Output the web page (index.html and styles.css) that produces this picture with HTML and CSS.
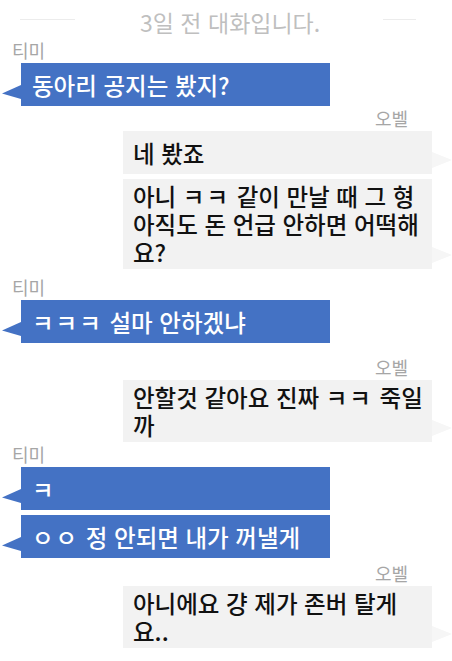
FILE: index.html
```html
<!DOCTYPE html>
<html lang="ko">
<head>
  <meta charset="UTF-8">
  <title>대화</title>
  <link rel="stylesheet" href="styles.css">
</head>
<body>
  <header class="day-divider">
    <span class="rule rule-left"></span>
    <span class="day-text">3일 전 대화입니다.</span>
    <span class="rule rule-right"></span>
  </header>

  <main class="chat">
    <section class="group them">
      <div class="name">티미</div>
      <div class="bubble"><p>동아리 공지는 봤지?</p></div>
    </section>

    <section class="group me">
      <div class="name">오벨</div>
      <div class="bubble"><p>네 봤죠</p></div>
      <div class="bubble"><p>아니 <span class="jamo">ㅋㅋ</span> 같이 만날 때 그 형 아직도 돈 언급 안하면 어떡해요?</p></div>
    </section>

    <section class="group them gap-m">
      <div class="name">티미</div>
      <div class="bubble"><p><span class="jamo">ㅋㅋㅋ</span> 설마 안하겠냐</p></div>
    </section>

    <section class="group me gap-l">
      <div class="name">오벨</div>
      <div class="bubble"><p>안할것 같아요 진짜 <span class="jamo">ㅋㅋ</span> 죽일까</p></div>
    </section>

    <section class="group them">
      <div class="name">티미</div>
      <div class="bubble"><p><span class="jamo">ㅋ</span></p></div>
      <div class="bubble"><p><span class="jamo">ㅇㅇ</span> 정 안되면 내가 꺼낼게</p></div>
    </section>

    <section class="group me gap-s">
      <div class="name">오벨</div>
      <div class="bubble"><p>아니에요 걍 제가 존버 탈게요..</p></div>
    </section>
  </main>
</body>
</html>
```

FILE: styles.css
```css
body {
  margin: 0;
  background: #fff;
  font-family: "Noto Sans CJK KR", "Noto Sans", sans-serif;
  color: #111;
}

/* date divider on top */
.day-divider {
  display: flex;
  align-items: center;
  padding: 5px 0 0 20px;
  height: 33px;
}
.rule {
  height: 1px;
  background: #ececec;
  margin-top: -4px;
}
.rule-left {
  width: 55px;
  margin-right: 65px;
}
.rule-right {
  width: 33px;
  margin-left: 63px;
}
.day-text {
  font-size: 23px;
  line-height: 32px;
  color: #bfbfbf;
}

/* message groups */
.chat {
  display: flex;
  flex-direction: column;
}
.group {
  display: flex;
  flex-direction: column;
  gap: 5px;
  margin-top: 1px;
}
.group.gap-s {
  margin-top: 4px;
}
.group.gap-m {
  margin-top: 7px;
}
.group.gap-l {
  margin-top: 13px;
}
.them {
  align-items: flex-start;
}
.me {
  align-items: flex-end;
}

.name {
  font-size: 18px;
  line-height: 22px;
  color: #a6a6a6;
  margin-bottom: -3px;
}
.them .name {
  margin-left: 12px;
}
.me .name {
  margin-right: 44px;
}

.bubble {
  position: relative;
  box-sizing: border-box;
  width: 309px;
  min-height: 43px;
  padding: 3px 4px 3px 11px;
  display: flex;
  align-items: center;
  font-size: 23.5px;
  font-weight: 500;
  line-height: 28px;
}
.bubble p {
  margin: 0;
}
.them .bubble {
  margin-left: 21px;
  background: #4472c4;
  color: #fff;
}
.me .bubble {
  margin-right: 20px;
  background: #f2f2f2;
  color: #111;
  padding-left: 10px;
}

/* compatibility jamo sit apart from each other */
.jamo {
  letter-spacing: 2px;
}

/* speech tails */
.bubble::after {
  content: "";
  position: absolute;
}
.them .bubble::after {
  left: -19px;
  bottom: 7px;
  width: 19px;
  height: 14px;
  background: #4472c4;
  clip-path: polygon(100% 0, 0 60%, 100% 100%);
}
.me .bubble::after {
  right: -20px;
  bottom: 6px;
  width: 20px;
  height: 16px;
  background: #f6f6f6;
  clip-path: polygon(0 0, 100% 50%, 0 100%);
}
```
